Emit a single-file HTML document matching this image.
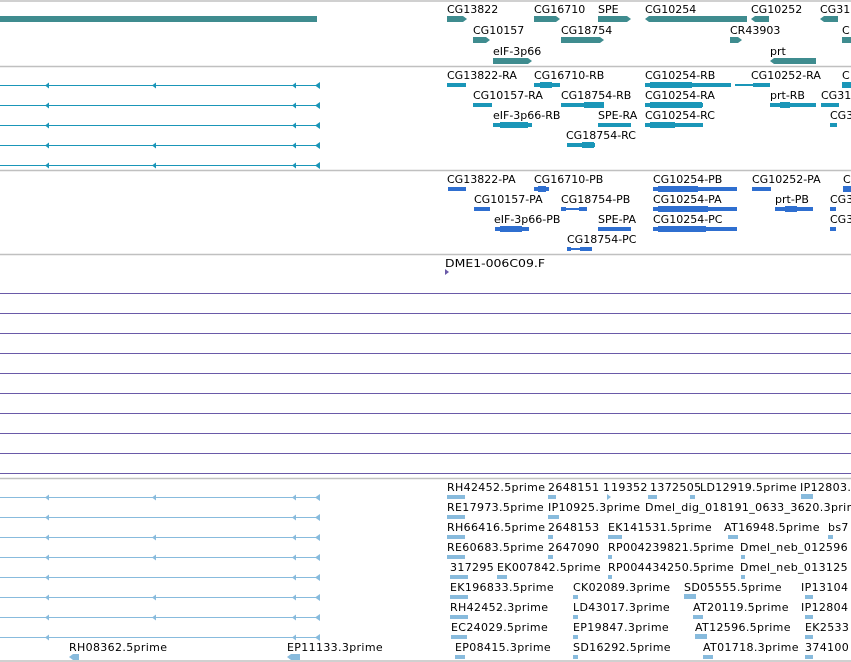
<!DOCTYPE html>
<html><head><meta charset="utf-8"><style>
html,body{margin:0;padding:0;background:#fff;width:851px;height:662px;overflow:hidden}
svg{display:block}
text{font-family:"DejaVu Sans","Liberation Sans",sans-serif;font-size:11px;fill:#000}
.b text{letter-spacing:0.35px}
</style></head><body>
<svg width="851" height="662" viewBox="0 0 851 662" xmlns="http://www.w3.org/2000/svg">
<!-- separators -->
<g stroke="#c0c0c0" stroke-width="1.5">
<line x1="0" y1="1" x2="851" y2="1"/>
<line x1="0" y1="66.5" x2="851" y2="66.5"/>
<line x1="0" y1="170.5" x2="851" y2="170.5"/>
<line x1="0" y1="254.5" x2="851" y2="254.5"/>
<line x1="0" y1="478.5" x2="851" y2="478.5"/>
<line x1="0" y1="661" x2="851" y2="661"/>
</g>
<!-- purple lines -->
<g stroke="#6a5aa8" stroke-width="1">
<line x1="0" y1="293.5" x2="851" y2="293.5"/><line x1="0" y1="313.5" x2="851" y2="313.5"/>
<line x1="0" y1="333.5" x2="851" y2="333.5"/><line x1="0" y1="353.5" x2="851" y2="353.5"/>
<line x1="0" y1="373.5" x2="851" y2="373.5"/><line x1="0" y1="393.5" x2="851" y2="393.5"/>
<line x1="0" y1="413.5" x2="851" y2="413.5"/><line x1="0" y1="433.5" x2="851" y2="433.5"/>
<line x1="0" y1="453.5" x2="851" y2="453.5"/><line x1="0" y1="473.5" x2="851" y2="473.5"/>
</g>

<!-- Track 1 genes -->
<g fill="#3f8c8f">
<rect x="0" y="16" width="317" height="6"/>
<polygon points="447,16 463,16 467,19 463,22 447,22"/>
<polygon points="534,16 556,16 560,19 556,22 534,22"/>
<polygon points="598,16 627,16 631,19 627,22 598,22"/>
<polygon points="649,16 747,16 747,22 649,22 645,19"/>
<polygon points="755,16 769,16 769,22 755,22 751,19"/>
<polygon points="824,16 838,16 838,22 824,22 820,19"/>
<polygon points="473,37 486,37 490,40 486,43 473,43"/>
<polygon points="561,37 600,37 604,40 600,43 561,43"/>
<polygon points="730,37 738,37 742,40 738,43 730,43"/>
<rect x="842" y="37" width="9" height="6"/>
<polygon points="493,58 528,58 532,61 528,64 493,64"/>
<polygon points="774,58 816,58 816,64 774,64 770,61"/>
</g>
<text x="447" y="13">CG13822</text><text x="534" y="13">CG16710</text><text x="598" y="13">SPE</text>
<text x="645" y="13">CG10254</text><text x="751" y="13">CG10252</text><text x="820" y="13">CG31</text>
<text x="473" y="34">CG10157</text><text x="561" y="34">CG18754</text><text x="730" y="34">CR43903</text><text x="842" y="34">C</text>
<text x="493" y="55">eIF-3p66</text><text x="770" y="55">prt</text>

<!-- Track 2 transcripts -->
<g stroke="#1a96b8" stroke-width="1">
<line x1="0" y1="85.5" x2="318" y2="85.5"/><line x1="0" y1="105.5" x2="318" y2="105.5"/>
<line x1="0" y1="125.5" x2="318" y2="125.5"/><line x1="0" y1="145.5" x2="318" y2="145.5"/>
<line x1="0" y1="165.5" x2="318" y2="165.5"/>
</g>
<g fill="#1a96b8">
<polygon points="45,85.5 49,82.5 49,88.5"/><polygon points="152,85.5 156,82.5 156,88.5"/><polygon points="292,85.5 296,82.5 296,88.5"/><polygon points="315,85.5 320,82 320,89"/>
<polygon points="45,105.5 49,102.5 49,108.5"/><polygon points="292,105.5 296,102.5 296,108.5"/><polygon points="315,105.5 320,102 320,109"/>
<polygon points="45,125.5 49,122.5 49,128.5"/><polygon points="292,125.5 296,122.5 296,128.5"/><polygon points="315,125.5 320,122 320,129"/>
<polygon points="45,145.5 49,142.5 49,148.5"/><polygon points="152,145.5 156,142.5 156,148.5"/><polygon points="292,145.5 296,142.5 296,148.5"/><polygon points="315,145.5 320,142 320,149"/>
<polygon points="45,165.5 49,162.5 49,168.5"/><polygon points="152,165.5 156,162.5 156,168.5"/><polygon points="292,165.5 296,162.5 296,168.5"/><polygon points="315,165.5 320,162 320,169"/>
<!-- right glyphs -->
<rect x="447" y="83" width="19" height="4"/>
<rect x="534" y="83" width="26" height="4"/><rect x="540" y="82" width="12" height="6"/>
<rect x="645" y="83" width="86" height="4"/><rect x="650" y="82" width="42" height="6"/><rect x="735" y="84" width="20" height="2"/><rect x="753" y="83" width="17" height="4"/>
<rect x="842" y="82" width="9" height="6"/>
<rect x="473" y="103" width="19" height="4"/>
<rect x="561" y="103" width="43" height="4"/><rect x="584" y="102" width="20" height="6"/>
<rect x="645" y="103" width="58" height="4"/><rect x="650" y="102" width="52" height="6"/>
<rect x="770" y="103" width="46" height="4"/><rect x="780" y="102" width="10" height="6"/>
<rect x="821" y="103" width="18" height="4"/>
<rect x="493" y="123" width="39" height="4"/><rect x="500" y="122" width="28" height="6"/>
<rect x="598" y="123" width="33" height="4"/>
<rect x="645" y="123" width="58" height="4"/><rect x="650" y="122" width="25" height="6"/>
<rect x="830" y="123" width="7" height="4"/>
<rect x="567" y="143" width="28" height="4"/><rect x="582" y="142" width="12" height="6"/>
</g>
<text x="447" y="79">CG13822-RA</text><text x="534" y="79">CG16710-RB</text><text x="645" y="79">CG10254-RB</text><text x="751" y="79">CG10252-RA</text><text x="842" y="79">C</text>
<text x="473" y="99">CG10157-RA</text><text x="561" y="99">CG18754-RB</text><text x="645" y="99">CG10254-RA</text><text x="770" y="99">prt-RB</text><text x="821" y="99">CG31</text>
<text x="493" y="119">eIF-3p66-RB</text><text x="598" y="119">SPE-RA</text><text x="645" y="119">CG10254-RC</text><text x="830" y="119">CG3</text>
<text x="566" y="139">CG18754-RC</text>

<!-- Track 3 -->
<g fill="#2f6fd0">
<rect x="448" y="187" width="18" height="4"/>
<rect x="534" y="187" width="15" height="4"/><rect x="538" y="186" width="8" height="6"/>
<rect x="653" y="187" width="84" height="4"/><rect x="658" y="186" width="40" height="6"/>
<rect x="752" y="187" width="19" height="4"/>
<rect x="843" y="186" width="8" height="6"/>
<rect x="474" y="207" width="16" height="4"/>
<rect x="561" y="208" width="26" height="2"/><rect x="561" y="207" width="5" height="4"/><rect x="579" y="207" width="8" height="4"/>
<rect x="653" y="207" width="84" height="4"/><rect x="658" y="206" width="50" height="6"/>
<rect x="775" y="207" width="38" height="4"/><rect x="785" y="206" width="12" height="6"/>
<rect x="830" y="207" width="6" height="4"/>
<rect x="495" y="227" width="34" height="4"/><rect x="500" y="226" width="22" height="6"/>
<rect x="598" y="227" width="33" height="4"/>
<rect x="653" y="227" width="84" height="4"/><rect x="658" y="226" width="48" height="6"/>
<rect x="830" y="227" width="6" height="4"/>
<rect x="567" y="248" width="25" height="2"/><rect x="567" y="247" width="4" height="4"/><rect x="580" y="247" width="12" height="4"/>
</g>
<text x="447" y="183">CG13822-PA</text><text x="534" y="183">CG16710-PB</text><text x="653" y="183">CG10254-PB</text><text x="752" y="183">CG10252-PA</text><text x="843" y="183">C</text>
<text x="474" y="203">CG10157-PA</text><text x="561" y="203">CG18754-PB</text><text x="653" y="203">CG10254-PA</text><text x="775" y="203">prt-PB</text><text x="830" y="203">CG3</text>
<text x="494" y="223">eIF-3p66-PB</text><text x="598" y="223">SPE-PA</text><text x="653" y="223">CG10254-PC</text><text x="830" y="223">CG3</text>
<text x="567" y="243">CG18754-PC</text>

<!-- DME -->
<text x="445" y="267" style="font-size:10.5px" textLength="100" lengthAdjust="spacingAndGlyphs">DME1-006C09.F</text>
<polygon points="445,269 449,272 445,275" fill="#6a5aa8"/>

<!-- Bottom track -->
<g stroke="#88bbdd" stroke-width="1">
<line x1="0" y1="497.5" x2="318" y2="497.5"/><line x1="0" y1="517.5" x2="318" y2="517.5"/>
<line x1="0" y1="537.5" x2="318" y2="537.5"/><line x1="0" y1="557.5" x2="318" y2="557.5"/>
<line x1="0" y1="577.5" x2="318" y2="577.5"/><line x1="0" y1="597.5" x2="318" y2="597.5"/>
<line x1="0" y1="617.5" x2="318" y2="617.5"/><line x1="0" y1="637.5" x2="318" y2="637.5"/>
</g>
<g fill="#88bbdd">
<polygon points="45,497.5 49,494.5 49,500.5"/><polygon points="152,497.5 156,494.5 156,500.5"/><polygon points="292,497.5 296,494.5 296,500.5"/><polygon points="315,497.5 320,494 320,501"/>
<polygon points="45,517.5 49,514.5 49,520.5"/><polygon points="292,517.5 296,514.5 296,520.5"/><polygon points="315,517.5 320,514 320,521"/>
<polygon points="45,537.5 49,534.5 49,540.5"/><polygon points="152,537.5 156,534.5 156,540.5"/><polygon points="292,537.5 296,534.5 296,540.5"/><polygon points="315,537.5 320,534 320,541"/>
<polygon points="45,557.5 49,554.5 49,560.5"/><polygon points="152,557.5 156,554.5 156,560.5"/><polygon points="292,557.5 296,554.5 296,560.5"/><polygon points="315,557.5 320,554 320,561"/>
<polygon points="45,577.5 49,574.5 49,580.5"/><polygon points="292,577.5 296,574.5 296,580.5"/><polygon points="315,577.5 320,574 320,581"/>
<polygon points="45,597.5 49,594.5 49,600.5"/><polygon points="152,597.5 156,594.5 156,600.5"/><polygon points="292,597.5 296,594.5 296,600.5"/><polygon points="315,597.5 320,594 320,601"/>
<polygon points="45,617.5 49,614.5 49,620.5"/><polygon points="152,617.5 156,614.5 156,620.5"/><polygon points="292,617.5 296,614.5 296,620.5"/><polygon points="315,617.5 320,614 320,621"/>
<polygon points="45,637.5 49,634.5 49,640.5"/><polygon points="292,637.5 296,634.5 296,640.5"/><polygon points="315,637.5 320,634 320,641"/>
<polygon points="69,657 73,654 79,654 79,660 73,660"/>
<polygon points="287,657 291,654 300,654 300,660 291,660"/>
<!-- right glyphs -->
<rect x="447" y="495" width="18" height="4"/><rect x="548" y="495" width="8" height="4"/><polygon points="607,494 611,497 607,500"/><rect x="648" y="495" width="9" height="4"/><rect x="690" y="495" width="5" height="4"/><rect x="801" y="494" width="12" height="5"/>
<rect x="447" y="515" width="18" height="4"/><rect x="548" y="515" width="11" height="4"/>
<rect x="447" y="535" width="18" height="4"/><rect x="548" y="535" width="5" height="4"/><rect x="608" y="535" width="14" height="4"/><rect x="728" y="535" width="10" height="4"/><rect x="828" y="535" width="5" height="4"/>
<rect x="447" y="555" width="18" height="4"/><rect x="548" y="555" width="5" height="4"/><rect x="608" y="555" width="4" height="4"/><rect x="741" y="555" width="4" height="4"/>
<rect x="450" y="575" width="18" height="4"/><rect x="497" y="575" width="10" height="4"/><rect x="608" y="575" width="4" height="4"/><rect x="741" y="575" width="4" height="4"/>
<rect x="450" y="595" width="18" height="4"/><rect x="573" y="595" width="5" height="4"/><rect x="684" y="594" width="12" height="5"/><rect x="805" y="595" width="8" height="4"/>
<rect x="450" y="615" width="18" height="4"/><rect x="573" y="615" width="5" height="4"/><rect x="693" y="615" width="10" height="4"/><rect x="805" y="615" width="8" height="4"/>
<rect x="451" y="635" width="16" height="4"/><rect x="573" y="635" width="5" height="4"/><rect x="695" y="634" width="12" height="5"/><rect x="805" y="635" width="8" height="4"/>
<rect x="455" y="655" width="10" height="4"/><rect x="573" y="655" width="5" height="4"/><rect x="703" y="655" width="10" height="4"/><rect x="805" y="655" width="8" height="4"/>
</g>
<g class="b">
<text x="69" y="651">RH08362.5prime</text><text x="287" y="651">EP11133.3prime</text>
<text x="447" y="491">RH42452.5prime</text><text x="548" y="491">2648151</text><text x="603" y="491">1</text><text x="611" y="491">19352</text><text x="650" y="491">1372505</text><text x="700" y="491">LD12919.5prime</text><text x="800" y="491">IP12803.</text>
<text x="447" y="511">RE17973.5prime</text><text x="548" y="511">IP10925.3prime</text><text x="645" y="511">Dmel_dig_018191_0633_3620.3prime</text>
<text x="447" y="531">RH66416.5prime</text><text x="548" y="531">2648153</text><text x="608" y="531">EK141531.5prime</text><text x="724" y="531">AT16948.5prime</text><text x="828" y="531">bs7</text>
<text x="447" y="551">RE60683.5prime</text><text x="548" y="551">2647090</text><text x="608" y="551">RP004239821.5prime</text><text x="740" y="551">Dmel_neb_012596</text>
<text x="450" y="571">317295</text><text x="497" y="571">EK007842.5prime</text><text x="608" y="571">RP004434250.5prime</text><text x="740" y="571">Dmel_neb_013125</text>
<text x="450" y="591">EK196833.5prime</text><text x="573" y="591">CK02089.3prime</text><text x="684" y="591">SD05555.5prime</text><text x="801" y="591">IP13104</text>
<text x="450" y="611">RH42452.3prime</text><text x="573" y="611">LD43017.3prime</text><text x="693" y="611">AT20119.5prime</text><text x="801" y="611">IP12804</text>
<text x="451" y="631">EC24029.5prime</text><text x="573" y="631">EP19847.3prime</text><text x="695" y="631">AT12596.5prime</text><text x="805" y="631">EK2533</text>
<text x="455" y="651">EP08415.3prime</text><text x="573" y="651">SD16292.5prime</text><text x="703" y="651">AT01718.3prime</text><text x="805" y="651">374100</text>
</g>
</svg>
</body></html>
